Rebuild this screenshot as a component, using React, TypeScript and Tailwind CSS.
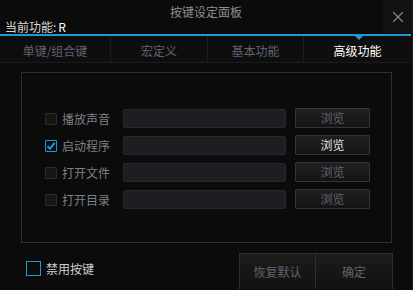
import { X } from "lucide-react";

const rows = [
  { label: "播放声音", checked: false },
  { label: "启动程序", checked: true },
  { label: "打开文件", checked: false },
  { label: "打开目录", checked: false },
];

const tabs = [
  { label: "单键/组合键", w: "w-[110px]" },
  { label: "宏定义", w: "w-[97px]" },
  { label: "基本功能", w: "w-[96px]" },
  { label: "高级功能", w: "w-[108px]", active: true },
];

function Check({ checked }: { checked: boolean }) {
  return (
    <span
      className={`mt-[2px] w-[12px] h-[12px] rounded-[1px] flex items-center justify-center ${
        checked ? "border border-[#1c9ad6] bg-[#0d0d0d]" : "border border-[#2c2c2c] bg-[#161616]"
      }`}
    >
      {checked && (
        <svg width="10" height="10" viewBox="0 0 10 10">
          <path d="M1.5 5.2 L4 7.8 L8.6 1.8" stroke="#1c9ad6" strokeWidth="2" fill="none" />
        </svg>
      )}
    </span>
  );
}

export default function App() {
  return (
    <div
      className="relative w-[413px] h-[290px] overflow-hidden bg-[#0b0b0b] border-r border-[#1a1a1a] text-[12px] leading-none"
      style={{ fontFamily: '"Noto Sans CJK SC", "Noto Sans", sans-serif' }}
    >
      {/* header */}
      <div className="h-[34px] flex flex-col">
        <div className="h-[20px] flex items-center justify-center pt-[4px] text-[#8e8e8e]">按键设定面板</div>
        <div className="h-[14px] pl-[5px] flex items-center text-[#d8d8d8]">
          当前功能: <span className="ml-[2px] text-white">R</span>
        </div>
      </div>
      <div className="absolute top-0 right-0 w-[29px] h-[33px] bg-[#121212] flex items-center justify-center">
        <X size={18} strokeWidth={1.5} className="text-[#8a8a8a]" />
      </div>
      <div className="h-[2px] mr-[1px] bg-[#1c9ad6]" />

      {/* tabs */}
      <div className="h-[27px] flex bg-[#0e0e0e] border-b border-[#1c1c1c]">
        {tabs.map((t, i) => (
          <div
            key={t.label}
            className={`${t.w} relative flex items-center justify-center pt-[3px] ${
              i > 0 ? "border-l border-[#1e1e1e]" : ""
            } ${t.active ? "text-white" : "text-[#5d6470]"}`}
          >
            {t.active && (
              <span className="absolute top-0 left-[51px] w-0 h-0 border-l-[4px] border-r-[4px] border-t-[4px] border-l-transparent border-r-transparent border-t-[#1c9ad6]" />
            )}
            {t.label}
          </div>
        ))}
      </div>

      {/* group box */}
      <div className="mt-[9px] ml-[21px] w-[371px] h-[171px] border border-[#2e2e2e] pt-[35px] pl-[23px] flex flex-col gap-[7px]">
        {rows.map((r) => (
          <div key={r.label} className="h-[20px] flex items-center">
            <Check checked={r.checked} />
            <span className="ml-[5px] w-[61px] pt-[2px] text-[#7c8088]">{r.label}</span>
            <div className="w-[163px] h-[19px] rounded-[2px] bg-[#1d1e21] border border-[#27282c]" />
            <button
              className={`ml-[9px] w-[75px] h-[20px] rounded-[1px] border border-[#343434] bg-gradient-to-b from-[#202020] to-[#141414] ${
                r.checked ? "text-[#e2e2e2]" : "text-[#5d6470]"
              }`}
            >
              浏览
            </button>
          </div>
        ))}
      </div>

      {/* footer */}
      <div className="mt-[10px] flex">
        <div className="ml-[26px] flex items-center h-[27px] self-start mt-[2px]">
          <span className="w-[15px] h-[15px] border border-[#1c9ad6]" />
          <span className="ml-[5px] text-[#cfcfcf]">禁用按键</span>
        </div>
        <div className="ml-auto mr-[19px] flex">
          <button className="w-[77px] h-[36px] border border-b-0 border-[#2e2e2e] bg-gradient-to-b from-[#1c1c1c] to-[#111111] text-[#5d6470]">
            恢复默认
          </button>
          <button className="w-[77px] h-[36px] border border-b-0 border-l-0 border-[#2e2e2e] bg-gradient-to-b from-[#1c1c1c] to-[#111111] text-[#5d6470]">
            确定
          </button>
        </div>
      </div>
    </div>
  );
}
